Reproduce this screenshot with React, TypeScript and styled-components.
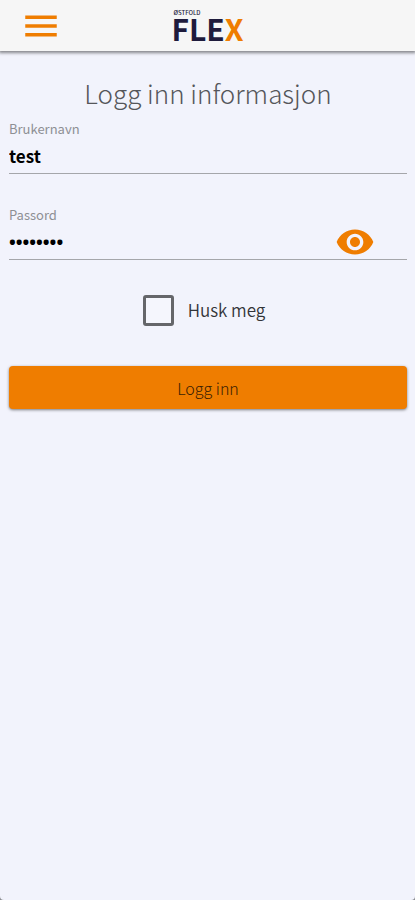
import React, { useState } from "react";
import styled, { createGlobalStyle } from "styled-components";

const orange = "#ef7d00";
const navy = "#1e1b3c";

const GlobalStyle = createGlobalStyle`
  *, *::before, *::after { box-sizing: border-box; }
  html { background: #8c8d92; }
  body {
    margin: 0;
    font-family: "Noto Sans CJK SC", "Noto Sans", sans-serif;
    color: #000;
  }
  button, input { font-family: inherit; }
`;

const Page = styled.div`
  min-height: 100vh;
  background: #f2f3fc;
  border-radius: 0 0 4px 4px;
`;

const Header = styled.header`
  display: grid;
  grid-template-columns: 1fr auto 1fr;
  align-items: center;
  height: 51px;
  padding: 0 20px;
  background: #f6f6f6;
  box-shadow: 0 1px 3px 1px rgba(0, 0, 0, 0.45);
`;

const IconButton = styled.button`
  display: flex;
  justify-self: start;
  padding: 0;
  border: 0;
  background: none;
  color: ${orange};
  cursor: pointer;
`;

const Logo = styled.a`
  display: flex;
  flex-direction: column;
  padding-bottom: 4px;
  color: ${navy};
  text-decoration: none;
`;

const LogoRegion = styled.span`
  padding-left: 2px;
  font-size: 6px;
  font-weight: 500;
  line-height: 8px;
`;

const LogoName = styled.span`
  font-size: 30px;
  font-weight: 700;
  line-height: 22px;
`;

const LogoAccent = styled.span`
  color: ${orange};
`;

const Form = styled.form`
  display: flex;
  flex-direction: column;
  padding: 24px 8px 0 9px;
`;

const Title = styled.h1`
  margin: 0 0 8px;
  font-size: 26px;
  font-weight: 300;
  line-height: 36px;
  text-align: center;
  color: #55565a;
`;

const Field = styled.div`
  display: flex;
  flex-direction: column;
  margin-bottom: 31px;
`;

const FieldLabel = styled.label`
  font-size: 13px;
  font-weight: 400;
  line-height: 20px;
  color: #8e8f94;
`;

const InputRow = styled.div`
  display: flex;
  align-items: center;
  height: 35px;
  padding-right: 32px;
  border-bottom: 1px solid #a5a6aa;
`;

const TextInput = styled.input`
  flex: 1;
  min-width: 0;
  height: 32px;
  padding: 0 0 2px;
  border: 0;
  outline: 0;
  background: none;
  color: #000;
  font-size: 17px;
  font-weight: 700;
  &[type="password"] {
    padding: 0;
    font-family: "Noto Sans", sans-serif;
    font-size: 18px;
  }
`;

const Remember = styled.label`
  display: flex;
  align-items: center;
  align-self: center;
  gap: 14px;
  margin-top: 3px;
  padding-right: 8px;
  font-size: 17px;
  font-weight: 350;
  line-height: 32px;
  color: #333438;
`;

const Checkbox = styled.input`
  appearance: none;
  width: 31px;
  height: 31px;
  margin: 0;
  border: 3px solid #65666a;
  border-radius: 3px;
  background: #f5f6fd;
  &:checked { background: ${orange}; }
`;

const SubmitButton = styled.button`
  height: 43px;
  margin-top: 40px;
  padding: 0;
  border: 0;
  border-radius: 4px;
  background: ${orange};
  box-shadow: 0 1px 3px rgba(0, 0, 0, 0.5);
  color: #3a1e04;
  font-size: 16px;
  font-weight: 300;
  cursor: pointer;
`;

function MenuIcon() {
  return (
    <svg width="42" height="42" viewBox="0 0 24 24" fill="currentColor" aria-hidden="true">
      <path d="M3 18h18v-2H3v2zm0-5h18v-2H3v2zm0-7v2h18V6H3z" />
    </svg>
  );
}

function EyeIcon() {
  return (
    <svg width="40" height="40" viewBox="0 0 24 24" fill="currentColor" aria-hidden="true">
      <path d="M12 4.5C7 4.5 2.73 7.61 1 12c1.73 4.39 6 7.5 11 7.5s9.27-3.11 11-7.5c-1.73-4.39-6-7.5-11-7.5zM12 17c-2.76 0-5-2.24-5-5s2.24-5 5-5 5 2.24 5 5-2.24 5-5 5zm0-8c-1.66 0-3 1.34-3 3s1.34 3 3 3 3-1.34 3-3-1.34-3-3-3z" />
    </svg>
  );
}

export default function App() {
  const [username, setUsername] = useState("test");
  const [password, setPassword] = useState("passord1");
  const [visible, setVisible] = useState(false);
  const [remember, setRemember] = useState(false);

  return (
    <>
      <GlobalStyle />
      <Page>
        <Header>
          <IconButton type="button" aria-label="Meny">
            <MenuIcon />
          </IconButton>
          <Logo href="#">
            <LogoRegion>ØSTFOLD</LogoRegion>
            <LogoName>
              FLE<LogoAccent>X</LogoAccent>
            </LogoName>
          </Logo>
        </Header>
        <Form onSubmit={(e) => e.preventDefault()}>
          <Title>Logg inn informasjon</Title>
          <Field>
            <FieldLabel htmlFor="username">Brukernavn</FieldLabel>
            <InputRow>
              <TextInput id="username" type="text" value={username} onChange={(e) => setUsername(e.target.value)} />
            </InputRow>
          </Field>
          <Field>
            <FieldLabel htmlFor="password">Passord</FieldLabel>
            <InputRow>
              <TextInput
                id="password"
                type={visible ? "text" : "password"}
                value={password}
                onChange={(e) => setPassword(e.target.value)}
              />
              <IconButton type="button" aria-label="Vis passord" onClick={() => setVisible(!visible)}>
                <EyeIcon />
              </IconButton>
            </InputRow>
          </Field>
          <Remember>
            <Checkbox type="checkbox" checked={remember} onChange={(e) => setRemember(e.target.checked)} />
            Husk meg
          </Remember>
          <SubmitButton type="submit">Logg inn</SubmitButton>
        </Form>
      </Page>
    </>
  );
}
